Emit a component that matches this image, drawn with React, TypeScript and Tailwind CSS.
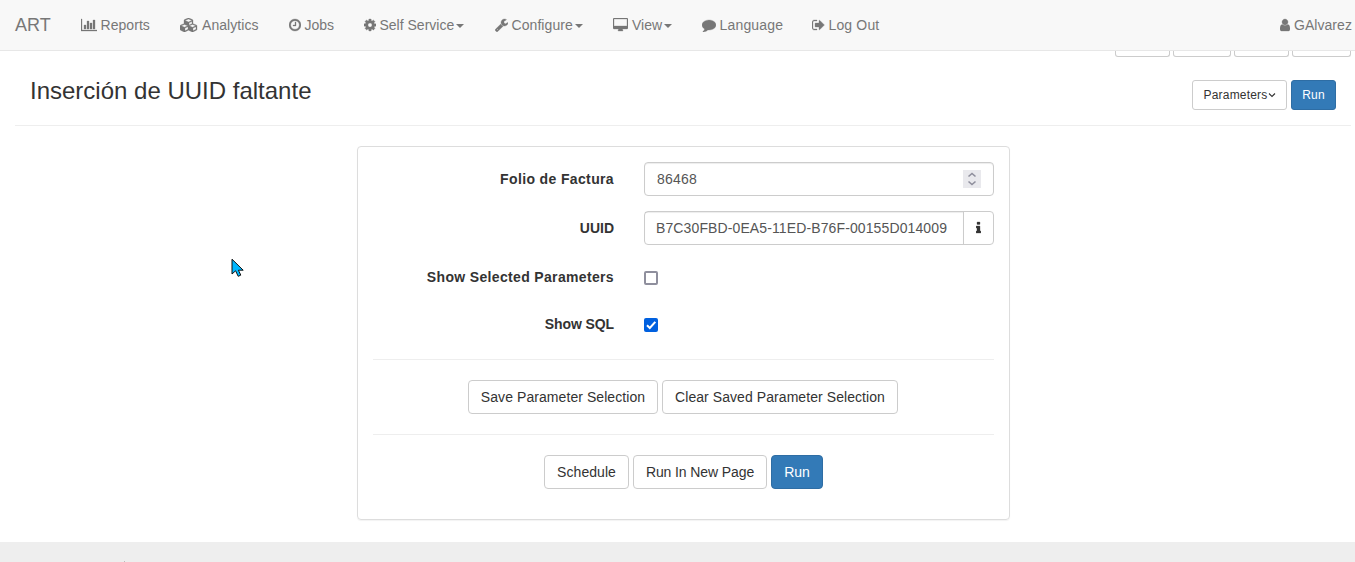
import type { ReactNode } from 'react';

type Glyph = { box: string; size: string; d: string };

const glyphs: Record<string, Glyph> = {
  chart: {
    box: '0 0 2048 1792',
    size: 'w-4 h-3.5',
    d: 'M640 896v512h-256v-512h256zm384-512v1024h-256v-1024h256zm1024 1152v128h-2048v-1536h128v1408h1920zm-640-896v768h-256v-768h256zm384-384v1152h-256v-1152h256z',
  },
  cubes: {
    box: '0 0 2304 1792',
    size: 'w-[18px] h-3.5',
    d: 'M640 1632l384-192v-314l-384 164v342zm-64-454l404-173-404-173-404 173zm1088 454l384-192v-314l-384 164v342zm-64-454l404-173-404-173-404 173zm-448-293l384-165v-266l-384 164v267zm-64-379l441-189-441-189-441 189zm1088 518v416q0 36-19 67t-52 47l-448 224q-25 14-57 14t-57-14l-448-224q-4-2-7-4-2 2-7 4l-448 224q-25 14-57 14t-57-14l-448-224q-33-16-52-47t-19-67v-416q0-38 21.5-70t56.5-48l434-186v-400q0-38 21.5-70t56.5-48l448-192q23-10 50-10t50 10l448 192q35 16 56.5 48t21.5 70v400l434 186q36 16 57 48t21 70z',
  },
  clock: {
    box: '128 0 1536 1792',
    size: 'w-3 h-3.5',
    d: 'M1024 544v448q0 14-9 23t-23 9h-320q-14 0-23-9t-9-23v-64q0-14 9-23t23-9h224v-352q0-14 9-23t23-9h64q14 0 23 9t9 23zm416 352q0-148-73-273t-198-198-273-73-273 73-198 198-73 273 73 273 198 198 273 73 273-73 198-198 73-273zm224 0q0 209-103 385.5t-279.5 279.5-385.5 103-385.5-103-279.5-279.5-103-385.5 103-385.5 279.5-279.5 385.5-103 385.5 103 279.5 279.5 103 385.5z',
  },
  cog: {
    box: '128 0 1536 1792',
    size: 'w-3 h-3.5',
    d: 'M1152 896q0-106-75-181t-181-75-181 75-75 181 75 181 181 75 181-75 75-181zm512-109v222q0 12-8 23t-20 13l-185 28q-19 54-39 91 35 50 107 138 10 12 10 25t-9 23q-27 37-99 108t-94 71q-12 0-26-9l-138-108q-44 23-91 38-16 136-29 186-7 28-36 28h-222q-14 0-24.5-8.5t-11.5-21.5l-28-184q-49-16-90-37l-141 107q-10 9-25 9-14 0-25-11-126-114-165-168-7-10-7-23 0-12 8-23 15-21 51-66.5t54-70.5q-27-50-41-99l-183-27q-13-2-21-12.5t-8-23.5v-222q0-12 8-23t19-13l186-28q14-46 39-92-40-57-107-138-10-12-10-24 0-10 9-23 26-36 98.5-107.5t94.5-71.5q13 0 26 10l138 107q44-23 91-38 16-136 29-186 7-28 36-28h222q14 0 24.5 8.5t11.5 21.5l28 184q49 16 90 37l142-107q9-9 24-9 13 0 25 10 129 119 165 170 7 8 7 22 0 12-8 23-15 21-51 66.5t-54 70.5q26 50 41 98l183 28q13 2 21 12.5t8 23.5z',
  },
  wrench: {
    box: '64 0 1664 1792',
    size: 'w-[13px] h-3.5',
    d: 'M448 1472q0-26-19-45t-45-19-45 19-19 45 19 45 45 19 45-19 19-45zm644-420l-682 682q-37 37-90 37-52 0-91-37l-106-108q-38-36-38-90 0-53 38-91l681-681q39 98 114.5 173.5t173.5 114.5zm634-435q0 39-23 106-47 134-164.5 217.5t-258.5 83.5q-185 0-316.5-131.5t-131.5-316.5 131.5-316.5 316.5-131.5q58 0 121.5 16.5t107.5 46.5q16 11 16 28t-16 28l-293 169v224l193 107q5-3 79-48.5t135.5-81 70.5-35.5q15 0 23.5 10t8.5 25z',
  },
  desktop: {
    box: '-64 0 1920 1792',
    size: 'w-[15px] h-3.5',
    d: 'M1728 992v-832q0-13-9.5-22.5t-22.5-9.5h-1600q-13 0-22.5 9.5t-9.5 22.5v832q0 13 9.5 22.5t22.5 9.5h1600q13 0 22.5-9.5t9.5-22.5zm128-832v1088q0 66-47 113t-113 47h-544q0 37 16 77.5t32 71 16 43.5q0 26-19 45t-45 19h-512q-26 0-45-19t-19-45q0-14 16-44t32-70 16-78h-544q-66 0-113-47t-47-113v-1088q0-66 47-113t113-47h1600q66 0 113 47t47 113z',
  },
  comment: {
    box: '0 0 1792 1792',
    size: 'w-3.5 h-3.5',
    d: 'M1792 896q0 174-120 321.5t-326 233-450 85.5q-70 0-145-8-198 175-460 242-49 14-114 22-17 2-30.5-9t-17.5-29v-1q-3-4-.5-12t2-10 4.5-9.5l6-9 7-8.5 8-9q7-8 31-34.5t34.5-38 31-39.5 32.5-51 27-59 26-76q-157-89-247.5-220t-90.5-281q0-130 71-248.5t191-204.5 286-136.5 348-50.5q244 0 450 85.5t326 233 120 321.5z',
  },
  signOut: {
    box: '64 0 1664 1792',
    size: 'w-[13px] h-3.5',
    d: 'M704 1440q0 4 1 20t.5 26.5-3 23.5-10 19.5-20.5 6.5h-320q-119 0-203.5-84.5t-84.5-203.5v-704q0-119 84.5-203.5t203.5-84.5h320q13 0 22.5 9.5t9.5 22.5q0 4 1 20t.5 26.5-3 23.5-10 19.5-20.5 6.5h-320q-66 0-113 47t-47 113v704q0 66 47 113t113 47h312l11.5 1 11.5 3 8 5.5 7 9 2 13.5zm928-544q0 26-19 45l-544 544q-19 19-45 19t-45-19-19-45v-288h-448q-26 0-45-19t-19-45v-384q0-26 19-45t45-19h448v-288q0-26 19-45t45-19 45 19l544 544q19 19 19 45z',
  },
  user: {
    box: '256 0 1280 1792',
    size: 'w-2.5 h-3.5',
    d: 'M1536 1399q0 109-62.5 187t-150.5 78h-854q-88 0-150.5-78t-62.5-187q0-85 8.5-160.5t31.5-152 58.5-131 94-89 134.5-34.5q131 128 313 128t313-128q76 0 134.5 34.5t94 89 58.5 131 31.5 152 8.5 160.5zm-256-887q0 159-112.5 271.5t-271.5 112.5-271.5-112.5-112.5-271.5 112.5-271.5 271.5-112.5 271.5 112.5 112.5 271.5z',
  },
  info: {
    box: '576 0 640 1792',
    size: 'w-[5px] h-3.5',
    d: 'M1216 1344v128q0 26-19 45t-45 19h-512q-26 0-45-19t-19-45v-128q0-26 19-45t45-19h64v-384h-64q-26 0-45-19t-19-45v-128q0-26 19-45t45-19h384q26 0 45 19t19 45v576h64q26 0 45 19t19 45zm-128-1152v192q0 26-19 45t-45 19h-256q-26 0-45-19t-19-45v-192q0-26 19-45t45-19h256q26 0 45 19t19 45z',
  },
};

function Icon({ name }: { name: string }) {
  const g = glyphs[name];
  return (
    <svg viewBox={g.box} className={`${g.size} shrink-0 fill-current stroke-current`} strokeWidth="40" aria-hidden="true">
      <path d={g.d} />
    </svg>
  );
}

function NavItem({ icon, label, width, caret }: { icon: string; label: string; width: string; caret?: boolean }) {
  return (
    <a className={`flex h-full items-center pl-[15px] whitespace-nowrap ${width}`}>
      <Icon name={icon} />
      <span className="ml-1">{label}</span>
      {caret && (
        <span className="mt-px ml-0.5 border-x-4 border-t-4 border-x-transparent border-t-[#777]" />
      )}
    </a>
  );
}

function Button({ children, width, primary, small }: { children: ReactNode; width: string; primary?: boolean; small?: boolean }) {
  const tone = primary ? 'border-[#2e6da4] bg-[#337ab7] text-white' : 'border-[#ccc] bg-white text-[#333]';
  const size = small ? 'h-[30px] rounded-[3px] text-xs' : 'h-[34px] rounded text-sm';
  return (
    <button className={`flex items-center justify-center border whitespace-nowrap ${tone} ${size} ${width}`}>
      {children}
    </button>
  );
}

function Label({ children, tracking = '' }: { children: ReactNode; tracking?: string }) {
  return <div className={`w-[241px] shrink-0 text-right font-bold ${tracking}`}>{children}</div>;
}

export default function App() {
  return (
    <div className="relative flex h-[562px] w-[1355px] flex-col overflow-hidden bg-white font-['Liberation_Sans',Arial,sans-serif] text-sm leading-5 text-[#333]">
      <nav className="flex h-[51px] shrink-0 items-center border-b border-[#e7e7e7] bg-[#f8f8f8] text-[#777]">
        <a className="w-[65.5px] pl-[15px] text-lg leading-5">ART</a>
        <NavItem icon="chart" label="Reports" width="w-[99.5px] tracking-[0.05px]" />
        <NavItem icon="cubes" label="Analytics" width="w-[108.5px] tracking-[0.07px]" />
        <NavItem icon="clock" label="Jobs" width="w-[75px]" />
        <NavItem icon="cog" label="Self Service" width="w-[131px]" caret />
        <NavItem icon="wrench" label="Configure" width="w-[118.5px] tracking-[0.07px]" caret />
        <NavItem icon="desktop" label="View" width="w-[88.5px]" caret />
        <NavItem icon="comment" label="Language" width="w-[110px] tracking-[0.18px]" />
        <NavItem icon="signOut" label="Log Out" width="w-[100px] tracking-[0.15px]" />
        <div className="ml-auto h-full">
          <NavItem icon="user" label="GAlvarez" width="w-[90px] tracking-[0.05px]" />
        </div>
      </nav>

      <div className="flex h-[6px] shrink-0 justify-end gap-[3px] pr-1">
        <div className="w-[55px] rounded-b-[3px] border border-t-0 border-[#ccc]" />
        <div className="w-[58px] rounded-b-[3px] border border-t-0 border-[#ccc]" />
        <div className="w-[55px] rounded-b-[3px] border border-t-0 border-[#ccc]" />
        <div className="w-[59px] rounded-b-[3px] border border-t-0 border-[#ccc]" />
      </div>

      <header className="mr-1 ml-[15px] flex h-[69px] shrink-0 items-start justify-between border-b border-[#eee] pr-[15px] pl-[15px]">
        <h1 className="mt-[21px] text-2xl leading-[26px] font-normal">Inserción de UUID faltante</h1>
        <div className="mt-[23px] flex gap-1">
          <Button small width="w-[95px] tracking-[0.2px]">
            Parameters
            <svg viewBox="0 0 8 8" className="h-2 w-2 fill-none stroke-current" aria-hidden="true">
              <path d="M1 2.5L4 5.5L7 2.5" strokeWidth="1.1" />
            </svg>
          </Button>
          <Button small primary width="w-[45px] tracking-[0.2px]">Run</Button>
        </div>
      </header>

      <main className="mt-5 ml-[357px] h-[374px] w-[653px] shrink-0 rounded border border-[#ddd] px-[15px] pt-[15px] shadow-[0_1px_1px_rgba(0,0,0,0.05)]">
        <div className="flex h-[34px] items-center">
          <Label tracking="tracking-[0.36px]">Folio de Factura</Label>
          <div className="ml-[30px] flex h-[34px] w-[350px] items-center justify-between rounded border border-[#ccc] pr-3 pl-3 text-[#555] shadow-[inset_0_1px_1px_rgba(0,0,0,0.075)]">
            <span className="tracking-[0.2px]">86468</span>
            <svg viewBox="0 0 18 18" className="h-[18px] w-[18px] bg-[#e9e9ed]" aria-hidden="true">
              <path d="M5.5 6.5L9 3.5L12.5 6.5M5.5 11.5L9 14.5L12.5 11.5" fill="none" stroke="#8f8f9d" strokeWidth="1.6" />
            </svg>
          </div>
        </div>
        <div className="mt-[15px] flex h-[34px] items-center">
          <Label>UUID</Label>
          <div className="ml-[30px] flex h-[34px] w-[350px] rounded border border-[#ccc]">
            <div className="flex w-[319px] items-center border-r border-[#ccc] pl-[11px] tracking-[0.115px] whitespace-nowrap text-[#555] shadow-[inset_0_1px_1px_rgba(0,0,0,0.075)]">
              B7C30FBD-0EA5-11ED-B76F-00155D014009
            </div>
            <div className="flex flex-1 items-center justify-center pr-px">
              <Icon name="info" />
            </div>
          </div>
        </div>
        <div className="mt-[15px] flex h-[34px] items-center">
          <Label tracking="tracking-[0.34px]">Show Selected Parameters</Label>
          <span className="mt-px ml-[30px] h-3.5 w-3.5 rounded-[2px] border-2 border-[#8f8f9d]" />
        </div>
        <div className="mt-[13px] flex h-[34px] items-center">
          <Label tracking="tracking-[-0.1px]">Show SQL</Label>
          <svg viewBox="0 0 14 14" className="mt-px ml-[30px] h-3.5 w-3.5 rounded-[2px] bg-[#0060df]" aria-hidden="true">
            <path d="M3 7.2L5.8 10L11.3 3.8" fill="none" stroke="#fff" strokeWidth="2" />
          </svg>
        </div>
        <hr className="mt-[18px] border-[#eee]" />
        <div className="mt-5 flex justify-center gap-1 pr-px">
          <Button width="w-[190px] tracking-[0.07px]">Save Parameter Selection</Button>
          <Button width="w-[236px] tracking-[0.07px]">Clear Saved Parameter Selection</Button>
        </div>
        <hr className="mt-5 border-[#eee]" />
        <div className="mt-5 flex justify-center gap-1">
          <Button width="w-[85px] tracking-[0.05px]">Schedule</Button>
          <Button width="w-[134px] tracking-[-0.1px]">Run In New Page</Button>
          <Button primary width="w-[52px]">Run</Button>
        </div>
      </main>

      <footer className="mt-[22px] flex h-5 shrink-0 items-end bg-[#eee] pl-[124px]">
        <span className="h-px w-px bg-[#bbb]" />
      </footer>

      <svg viewBox="0 0 14 20" className="absolute top-[258px] left-[231px] h-5 w-3.5" aria-hidden="true">
        <path d="M1 1.2V16L4.6 12.8L7.2 18.3L9.8 17.1L7.4 12.2H12.2Z" fill="#00b7ff" stroke="#111" strokeWidth="1" />
      </svg>
    </div>
  );
}
